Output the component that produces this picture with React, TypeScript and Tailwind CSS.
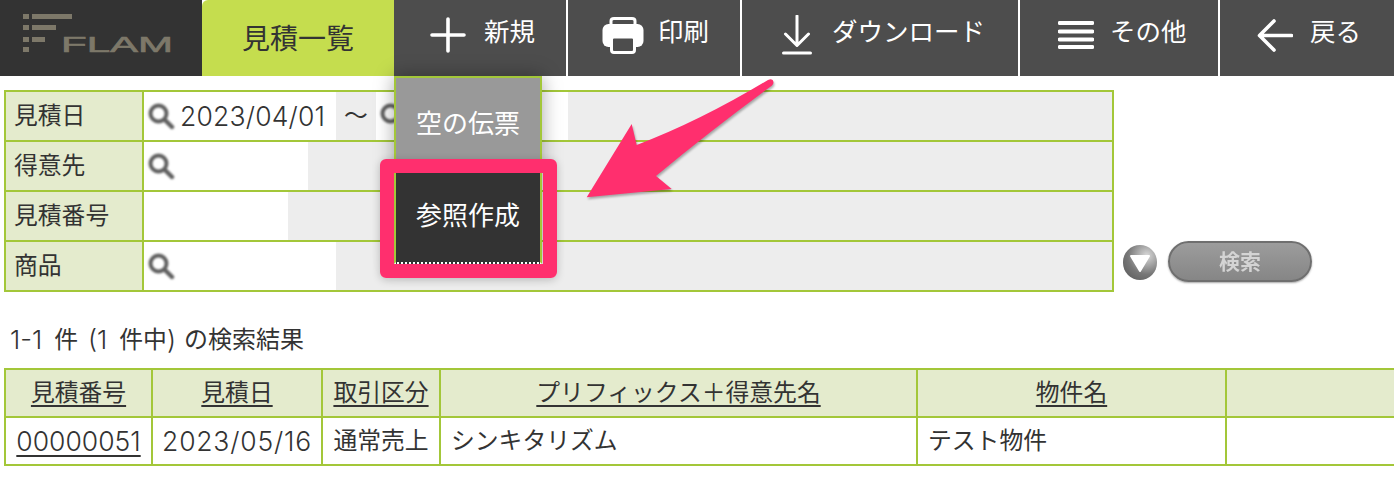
import { ReactNode } from 'react';

const Magnifier = () => (
    <svg width="28" height="28" viewBox="0 0 28 28" className="shrink-0 blur-[0.8px]">
        <circle cx="11.5" cy="11.5" r="8" fill="#fff" stroke="#5f5f5f" strokeWidth="4" />
        <path d="M17.5 17.5 L25 25" stroke="#5f5f5f" strokeWidth="4.4" strokeLinecap="round" />
    </svg>
);

const NavButton = ({ icon, label, width, pad, gap, children }: { icon: ReactNode; label: string; width: string; pad: string; gap: string; children?: ReactNode }) => (
    <div className={`relative flex h-full shrink-0 items-center bg-[#4d4d4d] pb-[6px] ${width} ${pad} ${gap}`}>
        {icon}
        <span className="-mt-[6px] text-[25.5px] leading-none whitespace-nowrap text-white">{label}</span>
        {children}
    </div>
);

const Logo = () => (
    <svg width="202" height="76" viewBox="0 0 202 76" className="shrink-0">
        <g fill="#7d7869">
            <rect x="23" y="14" width="6" height="5" />
            <rect x="23" y="25" width="6" height="5" />
            <rect x="23" y="37" width="6" height="5" />
            <rect x="23" y="47" width="6" height="5" />
            <rect x="32" y="14" width="40" height="5" />
            <rect x="32" y="25" width="24" height="5" />
            <rect x="32" y="37" width="13" height="5" />
        </g>
        <text x="61" y="52" fontSize="22.5" fill="#7d7869" stroke="#7d7869" strokeWidth="0.6" textLength="112" lengthAdjust="spacingAndGlyphs" fontFamily="Liberation Sans, sans-serif">FLAM</text>
    </svg>
);

const searchRows: { label: string; white: string; icon: boolean }[] = [
    { label: '得意先', white: 'w-[164px]', icon: true },
    { label: '見積番号', white: 'w-[144px]', icon: false },
    { label: '商品', white: 'w-[192px]', icon: true },
];

export default function App() {
    return (
        <div className="relative h-[504px] w-[1394px] overflow-hidden bg-white font-['Inter','Noto_Sans_CJK_JP',sans-serif] text-[23.8px] leading-none text-[#333]">
            {/* top nav */}
            <nav className="flex h-[76px] bg-white">
                <div className="bg-[#333] shrink-0"><Logo /></div>
                <div className="flex h-full w-[192px] shrink-0 items-center justify-center rounded-tl-[6px] bg-[#c5dd4e] text-[28px] pt-[2px]">見積一覧</div>
                <div className="flex h-full flex-1 gap-[2px]">
                    <NavButton
                        width="w-[172px]"
                        pad="pl-[36px]"
                        gap="gap-[18px]"
                        label="新規"
                        icon={
                            <svg width="36" height="36" viewBox="0 0 36 36" className="shrink-0">
                                <path d="M18 2 V34 M2 18 H34" stroke="#fff" strokeWidth="3.6" strokeLinecap="round" />
                            </svg>
                        }
                    >
                        <div className="absolute left-0 top-full z-10 w-[148px] shadow-[0_0_18px_rgba(0,0,0,0.35)]">
                            <div className="flex h-[94px] items-center justify-center border-x-2 border-t-2 border-[#a3c739] bg-[#999] text-[26px] text-white">空の伝票</div>
                            <div className="relative flex h-[94px] items-center justify-center border-x-2 border-b-2 border-x-[#a3c739] border-b-white border-dotted bg-[#333] text-[26px] text-white [border-left-style:solid] [border-right-style:solid]">
                                参照作成
                                <div className="absolute -left-[16px] -top-[11px] h-[119px] w-[177px] rounded-[6px] border-[14px] border-[#ff2f6e] shadow-[0_2px_8px_rgba(0,0,0,0.2)]"></div>
                            </div>
                        </div>
                    </NavButton>
                    <NavButton
                        width="w-[172px]"
                        pad="pl-[34px]"
                        gap="gap-[14px]"
                        label="印刷"
                        icon={
                            <svg width="42" height="37" viewBox="0 0 42 37" className="shrink-0">
                                <path d="M9 9 V4 Q9 1.5 12 1.5 H30 Q33 1.5 33 4 V9" fill="none" stroke="#fff" strokeWidth="3" />
                                <rect x="0.5" y="7" width="41" height="23" rx="6" fill="#fff" />
                                <rect x="9.5" y="20" width="23" height="15.5" rx="2.5" fill="#4d4d4d" stroke="#fff" strokeWidth="3" />
                            </svg>
                        }
                    />
                    <NavButton
                        width="w-[276px]"
                        pad="pl-[40px]"
                        gap="gap-[20px]"
                        label="ダウンロード"
                        icon={
                            <svg width="30" height="40" viewBox="0 0 30 40" className="shrink-0">
                                <path d="M15 1 V30 M3.5 19 L15 30.5 L26.5 19" fill="none" stroke="#fff" strokeWidth="3" strokeLinecap="round" strokeLinejoin="round" />
                                <path d="M1.5 38 H28.5" stroke="#fff" strokeWidth="3" strokeLinecap="round" />
                            </svg>
                        }
                    />
                    <NavButton
                        width="w-[198px]"
                        pad="pl-[38px]"
                        gap="gap-[16px]"
                        label="その他"
                        icon={
                            <svg width="36" height="28" viewBox="0 0 36 28" className="shrink-0">
                                <path d="M1.5 2 H34.5 M1.5 10.5 H34.5 M1.5 18.5 H34.5 M1.5 26 H34.5" stroke="#fff" strokeWidth="3.8" strokeLinecap="round" />
                            </svg>
                        }
                    />
                    <NavButton
                        width="flex-1"
                        pad="pl-[37px]"
                        gap="gap-[17px]"
                        label="戻る"
                        icon={
                            <svg width="36" height="33" viewBox="0 0 36 33" className="shrink-0">
                                <path d="M17 2 L2.5 16.5 L17 31 M3 16.5 H34.5" fill="none" stroke="#fff" strokeWidth="3.6" strokeLinecap="round" strokeLinejoin="round" />
                            </svg>
                        }
                    />
                </div>
            </nav>

            {/* search form */}
            <div className="ml-[4px] mt-[14px] flex items-start">
                <div className="grid w-[1110px] shrink-0 grid-cols-[136px_1fr] gap-[2px] bg-[#a3c739] p-[2px]">
                    <div className="flex h-[48px] items-center bg-[#e4ebcd] pl-[8px]">見積日</div>
                    <div className="flex h-[48px] bg-[#ededed]">
                        <div className="flex w-[192px] items-center gap-[5px] bg-white pl-[3px]">
                            <Magnifier />
                            <span className="text-[26.5px] font-light tracking-[0.2px]">2023/04/01</span>
                        </div>
                        <div className="flex w-[40px] items-center justify-center">〜</div>
                        <div className="flex w-[192px] items-center bg-white pl-[3px]">
                            <Magnifier />
                        </div>
                    </div>
                    {searchRows.map((row) => (
                        <div key={row.label} className="contents">
                            <div className="flex h-[48px] items-center bg-[#e4ebcd] pl-[8px]">{row.label}</div>
                            <div className="flex h-[48px] bg-[#ededed]">
                                <div className={`flex items-center bg-white pl-[3px] ${row.white}`}>
                                    {row.icon && <Magnifier />}
                                </div>
                            </div>
                        </div>
                    ))}
                </div>
                <div className="ml-[9px] mt-[151px] flex items-start gap-[11px]">
                    <div className="mt-[4px] flex h-[35px] w-[34px] items-center justify-center rounded-full bg-[radial-gradient(circle_at_70%_30%,#d8d8d8,#777_55%,#555)] blur-[0.5px]">
                        <svg width="22" height="20" viewBox="0 0 22 20">
                            <path d="M2 3 H20 L11 18 Z" fill="#fff" stroke="#fff" strokeWidth="2" strokeLinejoin="round" />
                        </svg>
                    </div>
                    <div className="flex h-[41px] w-[144px] items-center justify-center rounded-full border-2 border-[#6f6f6f] bg-linear-to-b from-[#9c9c9c] to-[#868686] text-[21px] font-bold text-[#d4d4d4] shadow-[0_1px_2px_rgba(0,0,0,0.35)] blur-[0.7px]">検索</div>
                </div>
            </div>

            {/* results */}
            <p className="ml-[10px] mt-[36px] flex h-[24px] items-center whitespace-pre">
                <span className="text-[26px] font-light">1-1</span>
                <span className="ml-[12px]">件</span>
                <span className="ml-[10px] text-[26px] font-light">(1</span>
                <span className="ml-[12px]">件中</span>
                <span className="text-[26px] font-light">)</span>
                <span className="ml-[8px] text-[24px]">の検索結果</span>
            </p>
            <div className="ml-[4px] mt-[16px] grid w-[1400px] grid-cols-[145px_168px_116px_475px_307px_1fr] grid-rows-[46px_46px] gap-[2px] bg-[#a3c739] p-[2px]">
                {['見積番号', '見積日', '取引区分', 'プリフィックス＋得意先名', '物件名'].map((title) => (
                    <div key={title} className="flex items-center justify-center bg-[#e4ebcd] underline underline-offset-[4px]">{title}</div>
                ))}
                <div className="bg-[#e4ebcd]"></div>
                <div className="flex items-center justify-center bg-white text-[26.5px] font-light underline underline-offset-[4px]">00000051</div>
                <div className="flex items-center justify-center bg-white text-[26.5px] font-light tracking-[0.8px]">2023/05/16</div>
                <div className="flex items-center justify-center bg-white">通常売上</div>
                <div className="flex items-center bg-white pl-[10px]">シンキタリズム</div>
                <div className="flex items-center bg-white pl-[10px]">テスト物件</div>
                <div className="bg-white"></div>
            </div>

            {/* callout arrow */}
            <svg width="200" height="130" viewBox="0 0 200 130" className="absolute left-[580px] top-[76px] drop-shadow-[1px_2px_1px_rgba(0,0,0,0.3)]">
                <path
                    d="M6.7 121.3 L51.7 48 L56.7 69 Q120 45 188 4 Q193 2 193.5 6 Q193.5 9 190 11 Q130 55 76 100 L91.7 113 Z"
                    fill="#ff2f6e"
                />
            </svg>
        </div>
    );
}
